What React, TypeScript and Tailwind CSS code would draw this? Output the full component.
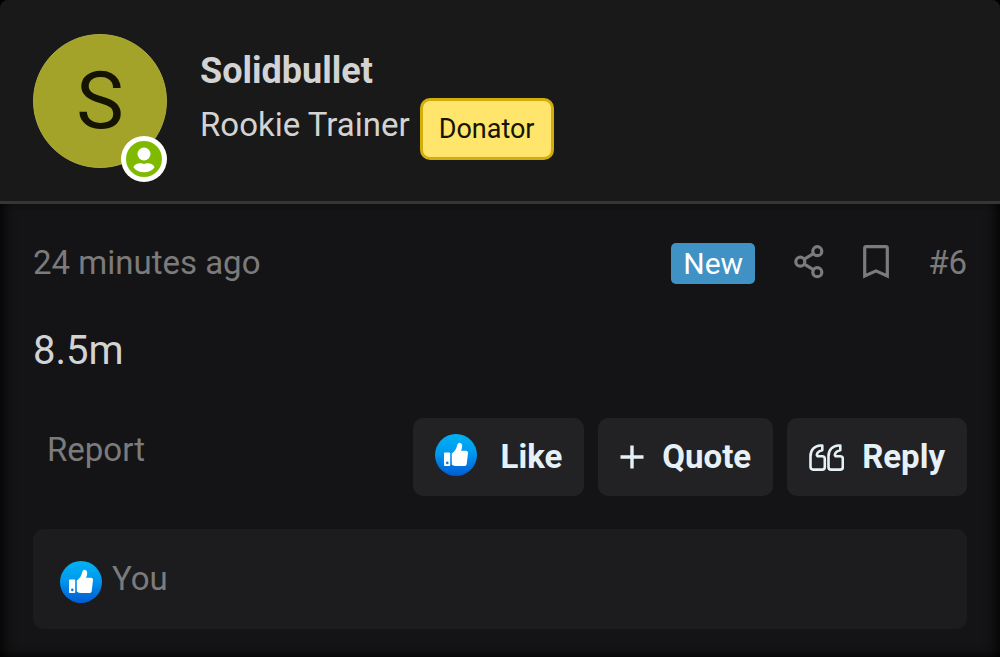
import React from 'react';

interface ActionButtonProps {
  label: string;
  icon: React.ReactNode;
}

const LikeIcon: React.FC = () => (
  <svg className="h-[42px] w-[42px] shrink-0" viewBox="0 0 42 42" aria-hidden="true">
    <defs>
      <linearGradient id="like-fill" x1="0" y1="0" x2="0" y2="1">
        <stop offset="0" stopColor="#00b2f5" />
        <stop offset="0.45" stopColor="#0099ee" />
        <stop offset="1" stopColor="#005bd3" />
      </linearGradient>
    </defs>
    <circle cx="21" cy="21" r="21" fill="url(#like-fill)" />
    <path
      fill="#fff"
      fillRule="evenodd"
      d="M10 18.600h4.200c.6 0 1 .4 1 1v11.500c0 .6-.4 1-1 1H10c-.6 0-1-.4-1-1V19.600c0-.6.4-1 1-1zm2.300 9a1.300 1.300 0 1 0 0 2.600 1.300 1.300 0 0 0 0-2.600z"
    />
    <path
      fill="#fff"
      d="M16.800 19.500c2.600-1.800 4.500-4.300 5.400-8.200.4-1.800 1.400-2.700 2.600-2.600 1.700.2 2.600 1.700 2.400 3.700-.1 1.600-.6 3-1.200 4.300h5c1.300 0 2.100 1 2 2.200l-1.200 10.500c-.2 1.700-1.200 2.700-2.800 2.700h-7.500c-1.800 0-3.300-.5-4.700-1.500z"
    />
  </svg>
);

const PlusIcon: React.FC = () => (
  <svg className="h-6 w-6" viewBox="0 0 24 24" fill="none" stroke="currentColor" strokeWidth="3.400" aria-hidden="true">
    <path d="M12 0.500v23M0.500 12h23" />
  </svg>
);

const QuoteIcon: React.FC = () => (
  <svg
    className="h-[27px] w-[35px]"
    viewBox="0 0 35 27"
    fill="none"
    stroke="currentColor"
    strokeWidth="2.600"
    strokeLinejoin="round"
    aria-hidden="true"
  >
    <path d="M13.300 1.500v4.800c-3 .5-5 2-5.500 4.700l.8 1.200h4.600c1.600 0 2.600 1 2.600 2.500v8.300c0 1.600-1 2.600-2.600 2.600H4.100c-1.600 0-2.600-1-2.600-2.600V12.200C1.500 5.600 5.900 1.700 11.500 1.500z" />
    <path d="M31.300 1.500v4.800c-3 .5-5 2-5.500 4.700l.8 1.200h4.600c1.600 0 2.600 1 2.600 2.500v8.300c0 1.600-1 2.600-2.600 2.600h-9.100c-1.600 0-2.600-1-2.600-2.600V12.200C19.500 5.600 23.900 1.700 29.500 1.500z" />
  </svg>
);

const ShareIcon: React.FC = () => (
  <svg className="h-[34px] w-[30px]" viewBox="0 0 30 34" fill="none" stroke="currentColor" strokeWidth="3.200" aria-hidden="true">
    <circle cx="23.300" cy="6.200" r="4.500" />
    <circle cx="6.300" cy="16.700" r="4.500" />
    <circle cx="23.300" cy="27.200" r="4.500" />
    <path d="M10.300 14.200l9-5.500M10.300 19.200l9 5.500" />
  </svg>
);

const BookmarkIcon: React.FC = () => (
  <svg className="h-[34px] w-[26px]" viewBox="0 0 26 34" fill="none" stroke="currentColor" strokeWidth="3.200" aria-hidden="true">
    <path d="M3.200 1.700h19.600c.9 0 1.500.6 1.500 1.500v27.800L13 25.900 1.700 31V3.200c0-.9.6-1.500 1.500-1.500z" />
  </svg>
);

const MemberIcon: React.FC = () => (
  <svg className="h-9 w-9" viewBox="0 0 36 36" aria-hidden="true">
    <circle cx="18" cy="18" r="18" fill="#7fba00" />
    <circle cx="18" cy="13" r="6.500" fill="#fff" />
    <path
      fill="#fff"
      d="M7.400 26.200c1-2.500 3.700-3.900 6.800-3.900 1.300 0 2.400.6 3.800.6s2.500-.6 3.800-.6c3.100 0 5.800 1.400 6.800 3.900-2.400 3.200-6.200 5-10.600 5s-8.200-1.800-10.600-5z"
    />
  </svg>
);

const ActionButton: React.FC<ActionButtonProps> = ({ label, icon }) => (
  <button
    type="button"
    className="flex h-[78px] items-center gap-[18px] rounded-[10px] bg-[#222224] px-[22px] text-[33px] leading-10 font-bold text-[#e6f1f7]"
  >
    {icon}
    <span>{label}</span>
  </button>
);

const PostHeader: React.FC = () => (
  <header className="flex gap-[33px] border-b-3 border-[#363638] bg-[#191919] px-[33px] pt-[34px] pb-[33px]">
    <div className="relative h-[134px] w-[134px] shrink-0">
      <a
        href="#profile"
        className="flex h-full w-full items-center justify-center rounded-full border border-[#acab40] bg-[#a3a329] text-[80px] leading-none text-[#141400]"
      >
        S
      </a>
      <span className="absolute right-0 -bottom-3.5 flex h-[46px] w-[46px] items-center justify-center rounded-full bg-white">
        <MemberIcon />
      </span>
    </div>
    <div className="pt-[17px] text-[#d3d3d3]">
      <h4 className="text-[36px] leading-10 font-bold">
        <a href="#profile">Solidbullet</a>
      </h4>
      <div className="flex items-start gap-2.5 pt-[7px]">
        <h5 className="pt-[7px] text-[33px] leading-10">Rookie Trainer</h5>
        <strong className="rounded-[10px] border-3 border-[#d1ae0c] bg-[#ffe56b] px-4 py-2 text-[27px] leading-10 font-normal text-[#141400]">
          Donator
        </strong>
      </div>
    </div>
  </header>
);

export default function App() {
  return (
    <div className="min-h-screen bg-black font-['Roboto',sans-serif]">
      <article className="overflow-hidden rounded-t-lg">
        <PostHeader />

        <div className="bg-[#141416] px-[33px] pt-[39px] pb-7 shadow-[inset_12px_0_14px_-10px_#000,inset_-12px_0_14px_-10px_#000,inset_0_-8px_12px_-8px_#000]">
          <div className="flex items-start justify-between text-[#7b7b7b]">
            <a href="#post" className="text-[33px] leading-10">
              <time>24 minutes ago</time>
            </a>
            <div className="flex items-start gap-[39px]">
              <span className="rounded-[5px] bg-[#3f92c3] px-3 text-[30px] leading-[41px] text-white">New</span>
              <button type="button" aria-label="Share" className="pt-0.5">
                <ShareIcon />
              </button>
              <button type="button" aria-label="Bookmark" className="pt-0.5">
                <BookmarkIcon />
              </button>
              <a href="#post" className="text-[33px] leading-10">#6</a>
            </div>
          </div>

          <p className="pt-10 text-[40px] leading-[54px] text-[#d3d3d3]">8.5m</p>

          <footer className="pt-10">
            <div className="flex justify-between">
              <a href="#report" className="px-3.5 pt-3 text-[33px] leading-10 text-[#7b7b7b]">
                Report
              </a>
              <div className="flex gap-3.5">
                <ActionButton
                  label="Like"
                  icon={
                    <span className="mr-1.5 mb-1">
                      <LikeIcon />
                    </span>
                  }
                />
                <ActionButton label="Quote" icon={<PlusIcon />} />
                <ActionButton label="Reply" icon={<QuoteIcon />} />
              </div>
            </div>

            <div className="mt-[33px] flex h-[100px] items-end gap-2.5 rounded-[10px] bg-[#1c1c1e] px-[27px] pb-[26px]">
              <LikeIcon />
              <a href="#reactions" className="text-[33px] leading-[48px] text-[#7b7b7b]">
                You
              </a>
            </div>
          </footer>
        </div>
      </article>
    </div>
  );
}
